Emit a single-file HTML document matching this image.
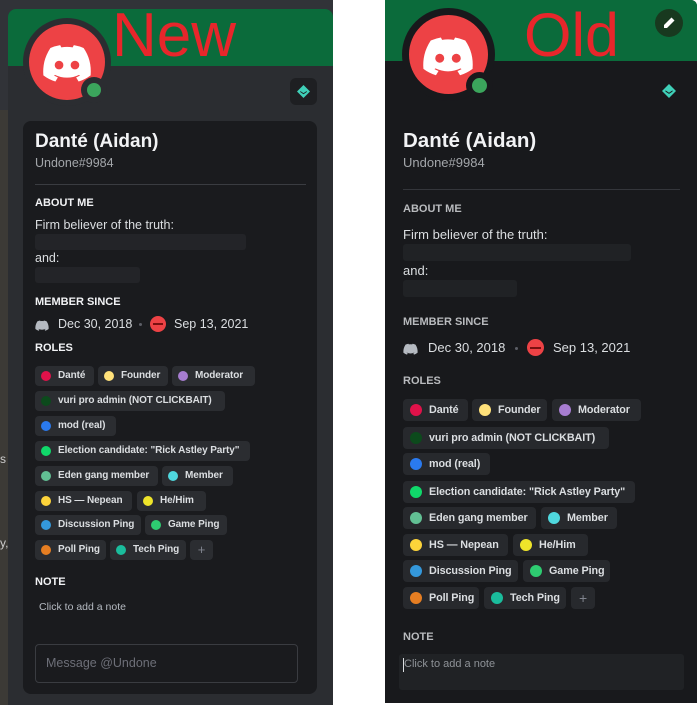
<!DOCTYPE html>
<html><head><meta charset="utf-8"><style>
*{margin:0;padding:0;box-sizing:border-box}
body{width:698px;height:705px;background:#fff;position:relative;overflow:hidden;font-family:"Liberation Sans",sans-serif}
.a{position:absolute}
.t{position:absolute;white-space:nowrap}
.h{font-size:11px;font-weight:bold;color:#f2f3f5}
.pill{position:absolute;background:#2b2d31;border-radius:4px;color:#dbdee1;font-weight:600;white-space:nowrap;overflow:hidden}
.pill i{position:absolute;border-radius:50%}
.L .pill{height:20px;font-size:10px;line-height:20px;padding-left:23px;letter-spacing:-0.1px}
.L .pill i{width:10px;height:10px;left:6px;top:5px}
.R .pill{height:22px;font-size:10.8px;line-height:22px;padding-left:26px;background:#27292d;letter-spacing:-0.1px}
.R .pill i{width:12px;height:12px;left:7px;top:5px}
</style></head><body>
<div class="a" style="left:0;top:0;width:333px;height:705px;background:#313338"></div>
<div class="a" style="left:0;top:110px;width:8px;height:595px;background:#3c3a36"></div>
<div class="t" style="left:0;top:452px;font-size:12px;color:#ccc">s</div>
<div class="t" style="left:0;top:536px;font-size:12px;color:#ccc">y,</div>
<div class="L">
<div class="a" style="left:8px;top:9px;width:325px;height:696px;background:#2b2d31;border-radius:8px 8px 0 0"></div>
<div class="a" style="left:8px;top:9px;width:325px;height:57px;background:#0b6b3b;border-radius:8px 8px 0 0"></div>
<div class="t" style="left:112px;top:3px;font-size:62px;color:#e8262b;line-height:66px">New</div>
<div class="a" style="left:23px;top:18px;width:88px;height:88px;border-radius:50%;background:#2b2d31"></div>
<div class="a" style="left:29px;top:24px;width:76px;height:76px;border-radius:50%;background:#ed4245"></div>
<svg class="a" style="left:39px;top:36px" width="56" height="50" viewBox="0 0 24 22"><path fill="#fff" d="M19.3 5.3A17 17 0 0 0 15 4l-.5 1a15 15 0 0 0-5 0L9 4a17 17 0 0 0-4.3 1.3C2 9.4 1.3 13.4 1.6 17.3A17 17 0 0 0 6.9 20l1.1-1.8a11 11 0 0 1-1.7-.8l.4-.3a12 12 0 0 0 10.6 0l.4.3c-.5.3-1.1.6-1.7.8l1.1 1.8a17 17 0 0 0 5.3-2.7c.4-4.5-.7-8.5-3.1-12Z"/><circle cx="8.5" cy="12.8" r="1.9" fill="#ed4245"/><circle cx="15.5" cy="12.8" r="1.9" fill="#ed4245"/></svg>
<div class="a" style="left:81px;top:77px;width:26px;height:26px;border-radius:50%;background:#2b2d31"></div>
<div class="a" style="left:87px;top:83px;width:14px;height:14px;border-radius:50%;background:#3ba55c"></div>
<div class="a" style="left:290px;top:78px;width:27px;height:27px;border-radius:6px;background:#1e1f22"></div>
<svg class="a" style="left:297px;top:85px" width="13" height="13" viewBox="0 0 12 12"><path fill="#3fd0b8" d="M6 0L12 6 6 12 0 6Z"/><path fill="#1e1f22" d="M3 5.5L6 7.5 9 5.5 9 6.5 6 8.5 3 6.5Z"/></svg>
<div class="a" style="left:23px;top:121px;width:294px;height:573px;background:#1a1b1e;border-radius:8px"></div>
<div class="t" style="left:35px;top:131px;font-size:19px;font-weight:bold;color:#f2f3f5">Danté (Aidan)</div>
<div class="t" style="left:35px;top:156px;font-size:12.5px;color:#a3a6aa">Undone#9984</div>
<div class="a" style="left:35px;top:184px;width:271px;height:1px;background:#3a3c41"></div>
<div class="t h" style="left:35px;top:197px">ABOUT ME</div>
<div class="t" style="left:35px;top:218px;font-size:12.5px;color:#dbdee1">Firm believer of the truth:</div>
<div class="a" style="left:35px;top:234px;width:211px;height:16px;background:#232428;border-radius:3px"></div>
<div class="t" style="left:35px;top:251px;font-size:12.5px;color:#dbdee1">and:</div>
<div class="a" style="left:35px;top:267px;width:105px;height:16px;background:#232428;border-radius:3px"></div>
<div class="t h" style="left:35px;top:296px">MEMBER SINCE</div>
<svg class="a" style="left:34px;top:318px" width="16" height="14" viewBox="0 0 24 22"><path fill="#b5bac1" d="M19.3 5.3A17 17 0 0 0 15 4l-.5 1a15 15 0 0 0-5 0L9 4a17 17 0 0 0-4.3 1.3C2 9.4 1.3 13.4 1.6 17.3A17 17 0 0 0 6.9 20l1.1-1.8a11 11 0 0 1-1.7-.8l.4-.3a12 12 0 0 0 10.6 0l.4.3c-.5.3-1.1.6-1.7.8l1.1 1.8a17 17 0 0 0 5.3-2.7c.4-4.5-.7-8.5-3.1-12Z"/></svg>
<div class="t" style="left:58px;top:317px;font-size:12.5px;color:#dbdee1">Dec 30, 2018</div>
<div class="a" style="left:139px;top:323px;width:3px;height:3px;border-radius:50%;background:#5c5e66"></div>
<div class="a" style="left:150px;top:316px;width:16px;height:16px;border-radius:50%;background:#ed4245"></div>
<div class="a" style="left:153px;top:323px;width:10px;height:2px;background:#7a1010"></div>
<div class="t" style="left:174px;top:317px;font-size:12.5px;color:#dbdee1">Sep 13, 2021</div>
<div class="t h" style="left:35px;top:342px">ROLES</div>
<div class="pill" style="left:35px;top:366px;width:59px"><i style="background:#e0124a"></i>Danté</div>
<div class="pill" style="left:98px;top:366px;width:70px"><i style="background:#ffe17a"></i>Founder</div>
<div class="pill" style="left:172px;top:366px;width:83px"><i style="background:#a77dd1"></i>Moderator</div>
<div class="pill" style="left:35px;top:391px;width:190px"><i style="background:#0c4a1c"></i>vuri pro admin (NOT CLICKBAIT)</div>
<div class="pill" style="left:35px;top:416px;width:81px"><i style="background:#2a7aef"></i>mod (real)</div>
<div class="pill" style="left:35px;top:441px;width:215px"><i style="background:#10d86a"></i>Election candidate: "Rick Astley Party"</div>
<div class="pill" style="left:35px;top:466px;width:123px"><i style="background:#62c094"></i>Eden gang member</div>
<div class="pill" style="left:162px;top:466px;width:71px"><i style="background:#4fd8de"></i>Member</div>
<div class="pill" style="left:35px;top:491px;width:97px"><i style="background:#fcd33a"></i>HS — Nepean</div>
<div class="pill" style="left:137px;top:491px;width:69px"><i style="background:#eee42a"></i>He/Him</div>
<div class="pill" style="left:35px;top:515px;width:106px"><i style="background:#3498db"></i>Discussion Ping</div>
<div class="pill" style="left:145px;top:515px;width:82px"><i style="background:#2ecc71"></i>Game Ping</div>
<div class="pill" style="left:35px;top:540px;width:71px"><i style="background:#e67e22"></i>Poll Ping</div>
<div class="pill" style="left:110px;top:540px;width:76px"><i style="background:#1abc9c"></i>Tech Ping</div>
<div class="pill" style="left:190px;top:540px;width:23px;padding:0;text-align:center;color:#80848e;font-weight:normal;font-size:13px">+</div>
<div class="t h" style="left:35px;top:576px">NOTE</div>
<div class="t" style="left:39px;top:601px;font-size:10.5px;color:#b5bac1">Click to add a note</div>
<div class="a" style="left:35px;top:644px;width:263px;height:39px;border:1px solid #3a3c41;border-radius:4px"></div>
<div class="t" style="left:46px;top:656px;font-size:12.5px;color:#6d6f78">Message @Undone</div>
</div>
<div class="R">
<div class="a" style="left:385px;top:0;width:312px;height:703px;background:#18191c;border-radius:0 6px 0 0"></div>
<div class="a" style="left:385px;top:0;width:312px;height:61px;background:#0b6b3b;border-radius:0 6px 0 0"></div>
<div class="t" style="left:524px;top:2px;font-size:61px;color:#e8262b;line-height:66px">Old</div>
<div class="a" style="left:655px;top:9px;width:28px;height:28px;border-radius:50%;background:#18391f"></div>
<svg class="a" style="left:662px;top:16px" width="14" height="14" viewBox="0 0 14 14"><path fill="#fff" d="M9.5 1.5l3 3L5 12H2V9Z"/></svg>
<div class="a" style="left:402px;top:8px;width:93px;height:93px;border-radius:50%;background:#18191c"></div>
<div class="a" style="left:409px;top:15px;width:79px;height:79px;border-radius:50%;background:#ed4245"></div>
<svg class="a" style="left:419px;top:28px" width="58" height="52" viewBox="0 0 24 22"><path fill="#fff" d="M19.3 5.3A17 17 0 0 0 15 4l-.5 1a15 15 0 0 0-5 0L9 4a17 17 0 0 0-4.3 1.3C2 9.4 1.3 13.4 1.6 17.3A17 17 0 0 0 6.9 20l1.1-1.8a11 11 0 0 1-1.7-.8l.4-.3a12 12 0 0 0 10.6 0l.4.3c-.5.3-1.1.6-1.7.8l1.1 1.8a17 17 0 0 0 5.3-2.7c.4-4.5-.7-8.5-3.1-12Z"/><circle cx="8.5" cy="12.8" r="1.9" fill="#ed4245"/><circle cx="15.5" cy="12.8" r="1.9" fill="#ed4245"/></svg>
<div class="a" style="left:466px;top:72px;width:27px;height:27px;border-radius:50%;background:#18191c"></div>
<div class="a" style="left:472px;top:78px;width:15px;height:15px;border-radius:50%;background:#3ba55c"></div>
<svg class="a" style="left:662px;top:84px" width="14" height="14" viewBox="0 0 12 12"><path fill="#3fd0b8" d="M6 0L12 6 6 12 0 6Z"/><path fill="#18191c" d="M3 5.5L6 7.5 9 5.5 9 6.5 6 8.5 3 6.5Z"/></svg>
<div class="t" style="left:403px;top:129px;font-size:20.5px;font-weight:bold;color:#f2f3f5">Danté (Aidan)</div>
<div class="t" style="left:403px;top:155px;font-size:13px;color:#a3a6aa">Undone#9984</div>
<div class="a" style="left:403px;top:189px;width:277px;height:1px;background:#34363b"></div>
<div class="t" style="left:403px;top:203px;font-size:11px;font-weight:bold;color:#b9bbbe">ABOUT ME</div>
<div class="t" style="left:403px;top:227px;font-size:13px;color:#dbdee1">Firm believer of the truth:</div>
<div class="a" style="left:403px;top:244px;width:228px;height:17px;background:#202225;border-radius:3px"></div>
<div class="t" style="left:403px;top:263px;font-size:13px;color:#dbdee1">and:</div>
<div class="a" style="left:403px;top:280px;width:114px;height:17px;background:#202225;border-radius:3px"></div>
<div class="t" style="left:403px;top:316px;font-size:11px;font-weight:bold;color:#b9bbbe">MEMBER SINCE</div>
<svg class="a" style="left:402px;top:341px" width="17" height="15" viewBox="0 0 24 22"><path fill="#b5bac1" d="M19.3 5.3A17 17 0 0 0 15 4l-.5 1a15 15 0 0 0-5 0L9 4a17 17 0 0 0-4.3 1.3C2 9.4 1.3 13.4 1.6 17.3A17 17 0 0 0 6.9 20l1.1-1.8a11 11 0 0 1-1.7-.8l.4-.3a12 12 0 0 0 10.6 0l.4.3c-.5.3-1.1.6-1.7.8l1.1 1.8a17 17 0 0 0 5.3-2.7c.4-4.5-.7-8.5-3.1-12Z"/></svg>
<div class="t" style="left:428px;top:340px;font-size:13px;color:#dbdee1">Dec 30, 2018</div>
<div class="a" style="left:515px;top:347px;width:3px;height:3px;border-radius:50%;background:#5c5e66"></div>
<div class="a" style="left:527px;top:339px;width:17px;height:17px;border-radius:50%;background:#ed4245"></div>
<div class="a" style="left:530px;top:347px;width:11px;height:2px;background:#7a1010"></div>
<div class="t" style="left:553px;top:340px;font-size:13px;color:#dbdee1">Sep 13, 2021</div>
<div class="t" style="left:403px;top:375px;font-size:11px;font-weight:bold;color:#b9bbbe">ROLES</div>
<div class="pill" style="left:403px;top:399px;width:65px"><i style="background:#e0124a"></i>Danté</div>
<div class="pill" style="left:472px;top:399px;width:75px"><i style="background:#ffe17a"></i>Founder</div>
<div class="pill" style="left:552px;top:399px;width:89px"><i style="background:#a77dd1"></i>Moderator</div>
<div class="pill" style="left:403px;top:427px;width:206px"><i style="background:#0c4a1c"></i>vuri pro admin (NOT CLICKBAIT)</div>
<div class="pill" style="left:403px;top:453px;width:87px"><i style="background:#2a7aef"></i>mod (real)</div>
<div class="pill" style="left:403px;top:481px;width:232px"><i style="background:#10d86a"></i>Election candidate: "Rick Astley Party"</div>
<div class="pill" style="left:403px;top:507px;width:133px"><i style="background:#62c094"></i>Eden gang member</div>
<div class="pill" style="left:541px;top:507px;width:76px"><i style="background:#4fd8de"></i>Member</div>
<div class="pill" style="left:403px;top:534px;width:105px"><i style="background:#fcd33a"></i>HS — Nepean</div>
<div class="pill" style="left:513px;top:534px;width:75px"><i style="background:#eee42a"></i>He/Him</div>
<div class="pill" style="left:403px;top:560px;width:115px"><i style="background:#3498db"></i>Discussion Ping</div>
<div class="pill" style="left:523px;top:560px;width:87px"><i style="background:#2ecc71"></i>Game Ping</div>
<div class="pill" style="left:403px;top:587px;width:76px"><i style="background:#e67e22"></i>Poll Ping</div>
<div class="pill" style="left:484px;top:587px;width:82px"><i style="background:#1abc9c"></i>Tech Ping</div>
<div class="pill" style="left:571px;top:587px;width:24px;padding:0;text-align:center;color:#80848e;font-weight:normal;font-size:14px">+</div>
<div class="t" style="left:403px;top:631px;font-size:11px;font-weight:bold;color:#b9bbbe">NOTE</div>
<div class="a" style="left:399px;top:654px;width:285px;height:36px;background:#202225;border-radius:3px"></div>
<div class="a" style="left:403px;top:658px;width:1px;height:14px;background:#dbdee1"></div>
<div class="t" style="left:404px;top:658px;font-size:11px;color:#8e9297">Click to add a note</div>
</div>
</body></html>
